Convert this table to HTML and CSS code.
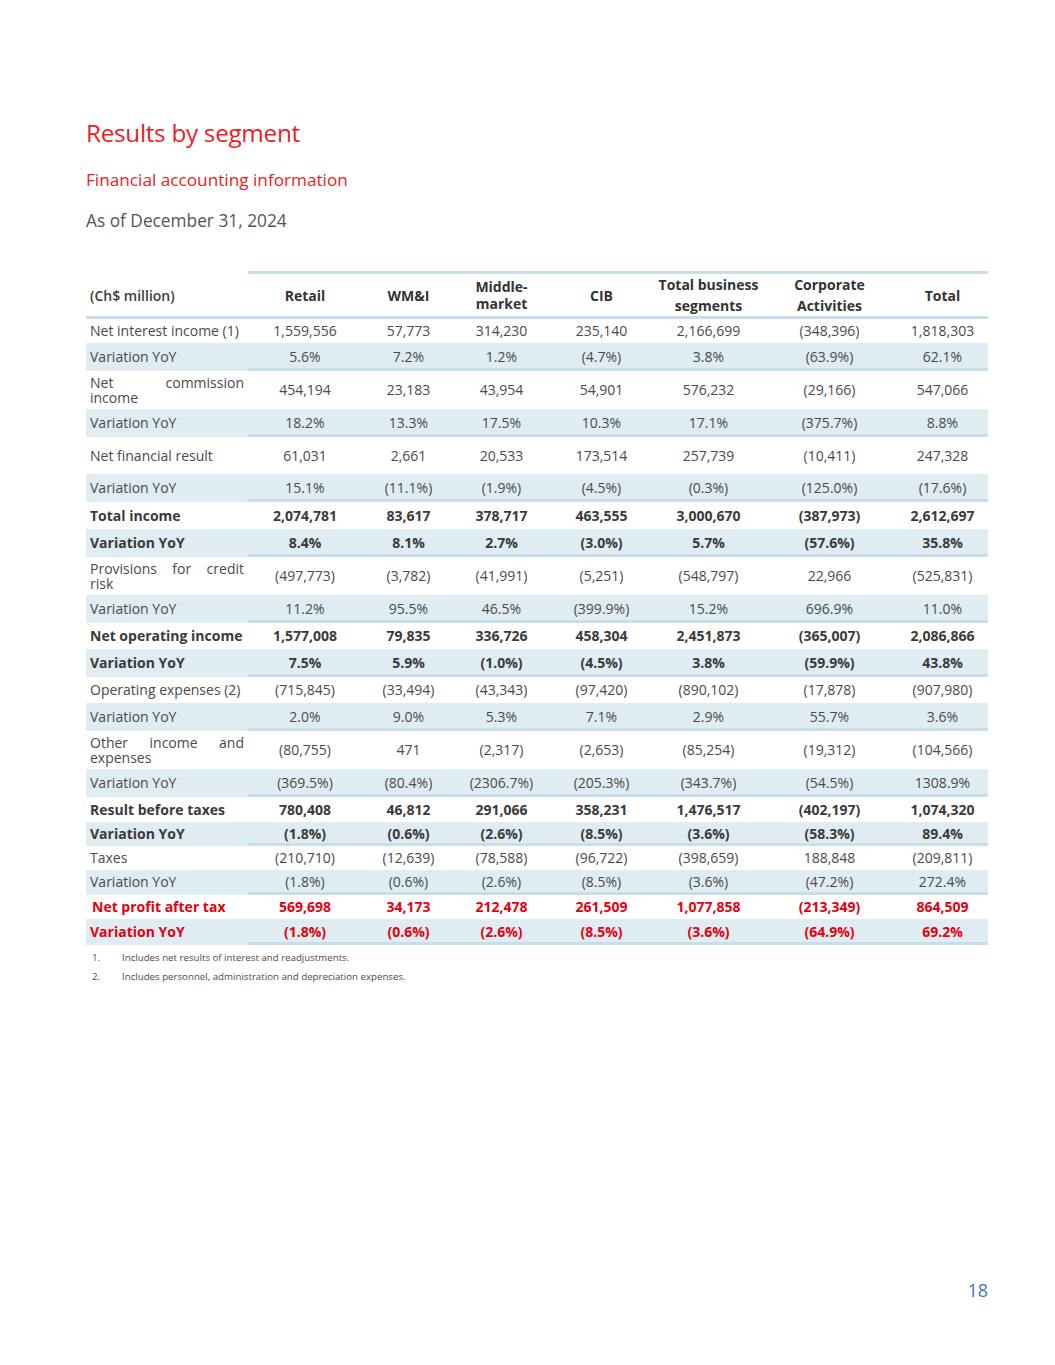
FILE: index.html
```html
<!DOCTYPE html>
<html lang="en">
<head>
<meta charset="utf-8">
<title>Results by segment</title>
<link rel="stylesheet" href="styles.css">
</head>
<body>
<div class="page">
  <h1 class="title">Results by segment</h1>
  <h2 class="subtitle">Financial accounting information</h2>
  <p class="asof">As of December 31, 2024</p>

  <table class="seg">
    <colgroup>
      <col class="c-label"><col class="c-retail"><col class="c-wmi"><col class="c-mid"><col class="c-cib"><col class="c-tbs"><col class="c-corp"><col class="c-total">
    </colgroup>
    <thead>
      <tr class="head">
        <th class="lbl">(Ch$ million)</th>
        <th>Retail</th>
        <th>WM&amp;I</th>
        <th class="tight">Middle-<br>market</th>
        <th>CIB</th>
        <th class="loose">Total business<br>segments</th>
        <th class="loose">Corporate<br>Activities</th>
        <th>Total</th>
      </tr>
    </thead>
    <tbody>
      <tr class="h24"><td class="lbl">Net interest income (1)</td><td>1,559,556</td><td>57,773</td><td>314,230</td><td>235,140</td><td>2,166,699</td><td>(348,396)</td><td>1,818,303</td></tr>
      <tr class="var h28"><td class="lbl">Variation YoY</td><td>5.6%</td><td>7.2%</td><td>1.2%</td><td>(4.7%)</td><td>3.8%</td><td>(63.9%)</td><td>62.1%</td></tr>
      <tr class="h38"><td class="lbl just">Net commission income</td><td>454,194</td><td>23,183</td><td>43,954</td><td>54,901</td><td>576,232</td><td>(29,166)</td><td>547,066</td></tr>
      <tr class="var h28"><td class="lbl">Variation YoY</td><td>18.2%</td><td>13.3%</td><td>17.5%</td><td>10.3%</td><td>17.1%</td><td>(375.7%)</td><td>8.8%</td></tr>
      <tr class="h37"><td class="lbl">Net financial result</td><td>61,031</td><td>2,661</td><td>20,533</td><td>173,514</td><td>257,739</td><td>(10,411)</td><td>247,328</td></tr>
      <tr class="var h28"><td class="lbl">Variation YoY</td><td>15.1%</td><td>(11.1%)</td><td>(1.9%)</td><td>(4.5%)</td><td>(0.3%)</td><td>(125.0%)</td><td>(17.6%)</td></tr>
      <tr class="bold h27"><td class="lbl">Total income</td><td>2,074,781</td><td>83,617</td><td>378,717</td><td>463,555</td><td>3,000,670</td><td>(387,973)</td><td>2,612,697</td></tr>
      <tr class="var bold h28"><td class="lbl">Variation YoY</td><td>8.4%</td><td>8.1%</td><td>2.7%</td><td>(3.0%)</td><td>5.7%</td><td>(57.6%)</td><td>35.8%</td></tr>
      <tr class="h38"><td class="lbl just">Provisions for credit risk</td><td>(497,773)</td><td>(3,782)</td><td>(41,991)</td><td>(5,251)</td><td>(548,797)</td><td>22,966</td><td>(525,831)</td></tr>
      <tr class="var h28"><td class="lbl">Variation YoY</td><td>11.2%</td><td>95.5%</td><td>46.5%</td><td>(399.9%)</td><td>15.2%</td><td>696.9%</td><td>11.0%</td></tr>
      <tr class="bold h26"><td class="lbl">Net operating income</td><td>1,577,008</td><td>79,835</td><td>336,726</td><td>458,304</td><td>2,451,873</td><td>(365,007)</td><td>2,086,866</td></tr>
      <tr class="var bold h28"><td class="lbl">Variation YoY</td><td>7.5%</td><td>5.9%</td><td>(1.0%)</td><td>(4.5%)</td><td>3.8%</td><td>(59.9%)</td><td>43.8%</td></tr>
      <tr class="h26"><td class="lbl">Operating expenses (2)</td><td>(715,845)</td><td>(33,494)</td><td>(43,343)</td><td>(97,420)</td><td>(890,102)</td><td>(17,878)</td><td>(907,980)</td></tr>
      <tr class="var h28"><td class="lbl">Variation YoY</td><td>2.0%</td><td>9.0%</td><td>5.3%</td><td>7.1%</td><td>2.9%</td><td>55.7%</td><td>3.6%</td></tr>
      <tr class="h38"><td class="lbl just">Other income and expenses</td><td>(80,755)</td><td>471</td><td>(2,317)</td><td>(2,653)</td><td>(85,254)</td><td>(19,312)</td><td>(104,566)</td></tr>
      <tr class="var h28"><td class="lbl">Variation YoY</td><td>(369.5%)</td><td>(80.4%)</td><td>(2306.7%)</td><td>(205.3%)</td><td>(343.7%)</td><td>(54.5%)</td><td>1308.9%</td></tr>
      <tr class="bold h25"><td class="lbl">Result before taxes</td><td>780,408</td><td>46,812</td><td>291,066</td><td>358,231</td><td>1,476,517</td><td>(402,197)</td><td>1,074,320</td></tr>
      <tr class="var bold h24"><td class="lbl">Variation YoY</td><td>(1.8%)</td><td>(0.6%)</td><td>(2.6%)</td><td>(8.5%)</td><td>(3.6%)</td><td>(58.3%)</td><td>89.4%</td></tr>
      <tr class="h24"><td class="lbl">Taxes</td><td>(210,710)</td><td>(12,639)</td><td>(78,588)</td><td>(96,722)</td><td>(398,659)</td><td>188,848</td><td>(209,811)</td></tr>
      <tr class="var h25"><td class="lbl">Variation YoY</td><td>(1.8%)</td><td>(0.6%)</td><td>(2.6%)</td><td>(8.5%)</td><td>(3.6%)</td><td>(47.2%)</td><td>272.4%</td></tr>
      <tr class="bold red h24"><td class="lbl indent">Net profit after tax</td><td>569,698</td><td>34,173</td><td>212,478</td><td>261,509</td><td>1,077,858</td><td>(213,349)</td><td>864,509</td></tr>
      <tr class="var bold red h26"><td class="lbl">Variation YoY</td><td>(1.8%)</td><td>(0.6%)</td><td>(2.6%)</td><td>(8.5%)</td><td>(3.6%)</td><td>(64.9%)</td><td>69.2%</td></tr>
    </tbody>
  </table>

  <ol class="notes">
    <li><span class="num">1.</span><span>Includes net results of interest and readjustments.</span></li>
    <li><span class="num">2.</span><span>Includes personnel, administration and depreciation expenses.</span></li>
  </ol>

  <div class="pagenum">18</div>
</div>
</body>
</html>
```

FILE: styles.css
```css
html, body {
  margin: 0;
  padding: 0;
  background: #ffffff;
}

body {
  font-family: "Open Sans", "Noto Sans", "Liberation Sans", sans-serif;
  color: #4a4a4a;
}

.page {
  width: 902px;
  padding: 118px 0 0 86px;
}

.title {
  margin: 0;
  font-size: 24.3px;
  line-height: 30px;
  font-weight: 400;
  color: #ec1c24;
  letter-spacing: -0.3px;
}

.subtitle {
  margin: 20px 0 0;
  font-size: 17.2px;
  line-height: 24px;
  font-weight: 400;
  color: #ec1c24;
}

.asof {
  margin: 17px 0 0;
  font-size: 17.3px;
  line-height: 24px;
  color: #555555;
}

.seg {
  margin-top: 38px;
  width: 902px;
  table-layout: fixed;
  border-collapse: separate;
  border-spacing: 0;
  font-size: 14px;
  line-height: 18px;
}

.c-label { width: 162px; }
.c-retail { width: 114px; }
.c-wmi { width: 93px; }
.c-mid { width: 93px; }
.c-cib { width: 107px; }
.c-tbs { width: 107px; }
.c-corp { width: 135px; }
.c-total { width: 91px; }

.seg th,
.seg td {
  padding: 0;
  text-align: center;
  vertical-align: middle;
  white-space: nowrap;
}

.seg .lbl {
  text-align: left;
  padding-left: 4px;
  padding-right: 4px;
}

.seg .just {
  white-space: normal;
  text-align: justify;
  text-align-last: left;
  line-height: 15px;
}

.head th {
  height: 41px;
  font-weight: 700;
  color: #333333;
  line-height: 21px;
  border-top: 3px solid #c8dee8;
  border-bottom: 3px solid #c8dee8;
}

.head th.lbl {
  border-top: 3px solid #ffffff;
  font-weight: 600;
  color: #3d3d3d;
}

.head th.tight {
  line-height: 17px;
}

.var td {
  background: #dfecf2;
  border-bottom: 3px solid #c8dee8;
  padding-top: 2px;
}

.var td.lbl {
  border-bottom: 3px solid #dfecf2;
}

.bold td {
  font-weight: 700;
  color: #3a3a3a;
}

.red td {
  color: #e3000f;
}

.indent {
  text-indent: 2px;
}

.h24 { height: 24px; }
.h25 { height: 25px; }
.h26 { height: 26px; }
.h27 { height: 27px; }
.h28 { height: 28px; }
.h37 { height: 37px; }
.h38 { height: 38px; }
.h39 { height: 39px; }

.notes {
  list-style: none;
  margin: 3px 0 0;
  padding: 0;
  font-size: 9.7px;
  line-height: 19px;
  color: #4a4a4a;
}

.notes li {
  display: flex;
}

.notes .num {
  box-sizing: border-box;
  width: 36px;
  padding-left: 6px;
}

.pagenum {
  margin-top: 292px;
  text-align: right;
  font-size: 18px;
  line-height: 24px;
  color: #4472c4;
}
```
